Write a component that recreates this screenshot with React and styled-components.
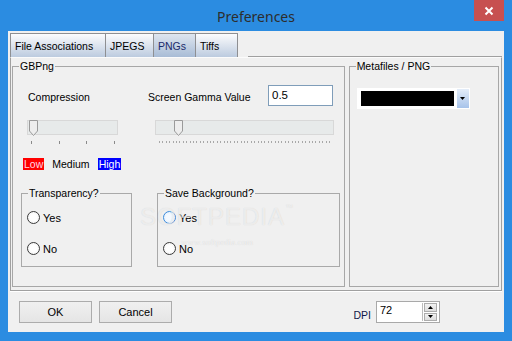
import React from "react";
import styled, { createGlobalStyle } from "styled-components";

const GlobalStyle = createGlobalStyle`
    html, body {
        margin: 0;
        padding: 0;
    }
    body {
        font-family: "Liberation Sans", Arial, sans-serif;
        font-size: 10.5px;
        color: #000;
    }
`;

function Thumb() {
    return (
        <svg width="9" height="16" viewBox="0 0 9 16">
            <path d="M0.5 0.5 H8.5 V11 L4.5 15.5 L0.5 11 Z" fill="#ededed" stroke="#9a9a9a" />
        </svg>
    );
}

function Radio({ label, hover }) {
    return (
        <RadioRow>
            <RadioCircle $hover={hover} />
            <RadioText>{label}</RadioText>
        </RadioRow>
    );
}

function App() {
    return (
        <>
            <GlobalStyle />
            <Window>
                <TitleBar>
                    Preferences
                    <CloseButton>
                        <svg width="10" height="10" viewBox="0 0 10 10">
                            <path d="M1.5 1.5 L8.5 8.5 M8.5 1.5 L1.5 8.5" stroke="#fff" strokeWidth="2" />
                        </svg>
                    </CloseButton>
                </TitleBar>
                <Client>
                    <TabStrip>
                        <Tab $w={96}>File Associations</Tab>
                        <Tab $w={49}>JPEGS</Tab>
                        <Tab $w={43} $active>PNGs</Tab>
                        <Tab $w={43}>Tiffs</Tab>
                        <TabFiller />
                    </TabStrip>
                    <Panel>
                        <GroupBox $w={334}>
                            <Legend>GBPng</Legend>
                            <GroupContent>
                                <TopRow>
                                    <FieldLabel $w={120}>Compression</FieldLabel>
                                    <FieldLabel $w={120}>Screen Gamma Value</FieldLabel>
                                    <TextInput>0.5</TextInput>
                                </TopRow>
                                <SliderRow>
                                    <SliderCol>
                                        <Track $w={91}>
                                            <ThumbHolder $x={1}>
                                                <Thumb />
                                            </ThumbHolder>
                                        </Track>
                                        <Ticks>
                                            <Tick />
                                            <Tick />
                                            <Tick />
                                            <Tick />
                                        </Ticks>
                                    </SliderCol>
                                    <SliderCol>
                                        <Track $w={179}>
                                            <ThumbHolder $x={18}>
                                                <Thumb />
                                            </ThumbHolder>
                                        </Track>
                                        <DotTicks />
                                    </SliderCol>
                                </SliderRow>
                                <LevelRow>
                                    <LevelTag $bg="#ff0000" $fg="#ffd6e6">Low</LevelTag>
                                    <LevelTag>Medium</LevelTag>
                                    <LevelTag $bg="#0000ff" $fg="#ffffff">High</LevelTag>
                                </LevelRow>
                                <OptionRow>
                                    <OptionBox $w={111}>
                                        <Legend>Transparency?</Legend>
                                        <RadioList>
                                            <Radio label="Yes" />
                                            <Radio label="No" />
                                        </RadioList>
                                    </OptionBox>
                                    <OptionBox $w={183}>
                                        <Legend>Save Background?</Legend>
                                        <RadioList>
                                            <Radio label="Yes" hover />
                                            <Radio label="No" />
                                        </RadioList>
                                    </OptionBox>
                                </OptionRow>
                            </GroupContent>
                        </GroupBox>
                        <GroupBox $w={151}>
                            <Legend>Metafiles / PNG</Legend>
                            <Combo>
                                <ComboValue />
                                <ComboButton>
                                    <svg width="5" height="3" viewBox="0 0 5 3">
                                        <path d="M0 0 H5 L2.5 3 Z" fill="#000" />
                                    </svg>
                                </ComboButton>
                            </Combo>
                        </GroupBox>
                    </Panel>
                    <Footer>
                        <Button>OK</Button>
                        <Button>Cancel</Button>
                        <DpiGroup>
                            <DpiLabel>DPI</DpiLabel>
                            <SpinBox>
                                <SpinValue>72</SpinValue>
                                <SpinButtons>
                                    <SpinButton>
                                        <svg width="5" height="3" viewBox="0 0 5 3">
                                            <path d="M0 3 H5 L2.5 0 Z" fill="#000" />
                                        </svg>
                                    </SpinButton>
                                    <SpinButton>
                                        <svg width="5" height="3" viewBox="0 0 5 3">
                                            <path d="M0 0 H5 L2.5 3 Z" fill="#000" />
                                        </svg>
                                    </SpinButton>
                                </SpinButtons>
                            </SpinBox>
                        </DpiGroup>
                    </Footer>
                </Client>
                <Watermark>
                    <WatermarkLogo>
                        SOFTPEDIA<sup>™</sup>
                    </WatermarkLogo>
                    <WatermarkUrl>www.softpedia.com</WatermarkUrl>
                </Watermark>
            </Window>
        </>
    );
}

const Window = styled.div`
    position: relative;
    width: 512px;
    height: 341px;
    box-sizing: border-box;
    padding: 0 8px 9px;
    background: #2b8ce1;
    display: flex;
    flex-direction: column;
    overflow: hidden;
`;
const TitleBar = styled.div`
    position: relative;
    height: 31px;
    display: flex;
    align-items: center;
    justify-content: center;
    font-family: "Noto Sans", "Open Sans", sans-serif;
    font-size: 14px;
    color: #2d2d2d;
    padding-top: 1px;
    box-sizing: border-box;
`;
const CloseButton = styled.div`
    position: absolute;
    top: 0;
    right: 0;
    width: 30px;
    height: 21px;
    background: #c75050;
    display: flex;
    align-items: center;
    justify-content: center;
`;
const Client = styled.div`
    flex: 1;
    background: #f0f0f0;
    padding: 2px 2px 0;
    display: flex;
    flex-direction: column;
`;
const TabStrip = styled.div`
    display: flex;
    height: 24px;
`;
const Tab = styled.div`
    width: ${(p) => p.$w}px;
    box-sizing: border-box;
    margin-right: -1px;
    border: 1px solid #8e8f92;
    border-bottom: none;
    padding: 0 0 0 4px;
    display: flex;
    align-items: center;
    color: ${(p) => (p.$active ? "#1b2a6b" : "#000")};
    background: ${(p) =>
        p.$active
            ? "linear-gradient(#dfe6ef, #a8bcd6)"
            : "linear-gradient(#fcfcfd, #bccbdf)"};
`;
const TabFiller = styled.div`
    flex: 1;
    margin-left: 11px;
    border-bottom: 1px solid #a0a0a0;
`;
const Panel = styled.div`
    height: 234px;
    box-sizing: border-box;
    border: 1px solid #a0a0a0;
    border-top-color: #fbfbfb;
    box-shadow: 0 1px 0 #ffffff;
    padding: 2px 2px 3px 1px;
    display: flex;
    gap: 4px;
`;
const GroupBox = styled.fieldset`
    width: ${(p) => p.$w}px;
    box-sizing: border-box;
    margin: 0;
    padding: 0;
    min-width: 0;
    border: 1px solid #a7a7a7;
`;
const Legend = styled.legend`
    margin-left: 6px;
    padding: 0 1px;
    line-height: 12px;
    font-size: 10.5px;
`;
const GroupContent = styled.div`
    padding: 13px 0 0 14px;
`;
const TopRow = styled.div`
    display: flex;
    align-items: center;
    height: 21px;
`;
const FieldLabel = styled.div`
    width: ${(p) => p.$w}px;
    padding-top: 3px;
    &:first-child {
        margin-left: 1px;
    }
`;
const TextInput = styled.div`
    width: 65px;
    height: 21px;
    box-sizing: border-box;
    border: 1px solid #7f9db9;
    background: #fff;
    padding: 3px 3px 0;
    font-size: 11.5px;
`;
const SliderRow = styled.div`
    display: flex;
    gap: 37px;
    margin-top: 14px;
`;
const SliderCol = styled.div`
    display: flex;
    flex-direction: column;
`;
const Track = styled.div`
    position: relative;
    width: ${(p) => p.$w}px;
    height: 15px;
    box-sizing: border-box;
    border: 1px solid #d8d8d8;
    background: #e7eaea;
`;
const ThumbHolder = styled.div`
    position: absolute;
    top: -1px;
    left: ${(p) => p.$x}px;
    line-height: 0;
`;
const Ticks = styled.div`
    display: flex;
    justify-content: space-between;
    padding: 0 3px 0 4px;
    margin-top: 6px;
`;
const Tick = styled.div`
    width: 1px;
    height: 3px;
    background: #8a8a8a;
`;
const DotTicks = styled.div`
    margin: 6px 4px 0;
    height: 2px;
    background: repeating-linear-gradient(to right, #a8a8a8 0 1px, transparent 1px 3.4px);
`;
const LevelRow = styled.div`
    display: flex;
    gap: 7px;
    margin: 14px 0 0 -4px;
`;
const LevelTag = styled.span`
    height: 12px;
    line-height: 12px;
    padding: 0 1px;
    background: ${(p) => p.$bg || "transparent"};
    color: ${(p) => p.$fg || "#000"};
`;
const OptionRow = styled.div`
    display: flex;
    gap: 25px;
    margin: 17px 0 0 -6px;
`;
const OptionBox = styled(GroupBox)`
    height: 80px;
    border-color: #a9a9a9;
`;
const RadioList = styled.div`
    display: flex;
    flex-direction: column;
    gap: 18px;
    padding: 12px 0 0 5px;
`;
const RadioRow = styled.div`
    display: flex;
    align-items: center;
    height: 13px;
`;
const RadioCircle = styled.div`
    width: 13px;
    height: 13px;
    box-sizing: border-box;
    border-radius: 50%;
    border: 1px solid ${(p) => (p.$hover ? "#3c8cdc" : "#3a3a3a")};
    background: ${(p) =>
        p.$hover
            ? "radial-gradient(circle at 50% 50%, #f4f9ff 40%, #dcebfb)"
            : "radial-gradient(circle at 50% 50%, #ffffff 40%, #ececec)"};
`;
const RadioText = styled.span`
    margin-left: 3px;
    font-size: 11px;
`;
const Combo = styled.div`
    display: flex;
    width: 113px;
    height: 21px;
    box-sizing: border-box;
    margin: 16px 0 0 7px;
    padding: 3px 1px 3px 4px;
    background: #fff;
`;
const ComboValue = styled.div`
    width: 93px;
    height: 15px;
    background: #000;
`;
const ComboButton = styled.div`
    width: 12px;
    margin: -2px 0 -2px 3px;
    background: linear-gradient(#e4edf9, #a7c3ea);
    display: flex;
    align-items: center;
    justify-content: center;
`;
const Footer = styled.div`
    flex: 1;
    display: flex;
    align-items: flex-start;
    gap: 7px;
    padding: 10px 62px 0 9px;
`;
const Button = styled.div`
    width: 73px;
    height: 22px;
    box-sizing: border-box;
    border: 1px solid #acacac;
    background: linear-gradient(#f0f0f0, #e5e5e5);
    display: flex;
    align-items: center;
    justify-content: center;
    font-size: 11px;
`;
const DpiGroup = styled.div`
    margin-left: auto;
    display: flex;
    gap: 5px;
`;
const DpiLabel = styled.span`
    padding-top: 8px;
    color: #10184a;
    font-size: 10.5px;
`;
const SpinBox = styled.div`
    width: 64px;
    height: 22px;
    box-sizing: border-box;
    border: 1px solid #a9a9a9;
    background: #fff;
    display: flex;
`;
const SpinValue = styled.div`
    flex: 1;
    padding: 2px 0 0 3px;
    font-size: 11px;
`;
const SpinButtons = styled.div`
    display: flex;
    flex-direction: column;
    width: 13px;
    margin: 1px 2px 1px 0;
    border-left: 1px solid #bcbcbc;
    padding-left: 1px;
    gap: 1px;
`;
const SpinButton = styled.div`
    flex: 1;
    border: 1px solid #adadad;
    background: linear-gradient(#f2f2f2, #dedede);
    display: flex;
    align-items: center;
    justify-content: center;
`;
const Watermark = styled.div`
    position: absolute;
    left: 140px;
    top: 203px;
    display: flex;
    flex-direction: column;
    align-items: center;
    pointer-events: none;
`;
const WatermarkLogo = styled.div`
    font-family: "Liberation Sans", Arial, sans-serif;
    font-size: 24px;
    letter-spacing: 1px;
    color: rgba(255, 255, 255, 0.6);
    text-shadow: 0 0 1px rgba(0, 0, 0, 0.14);
    sup {
        font-size: 8px;
        vertical-align: top;
    }
`;
const WatermarkUrl = styled.div`
    font-family: "Liberation Serif", serif;
    font-size: 9px;
    margin-top: 6px;
    color: rgba(255, 255, 255, 0.6);
    text-shadow: 0 0 1px rgba(0, 0, 0, 0.14);
`;

export default App;
